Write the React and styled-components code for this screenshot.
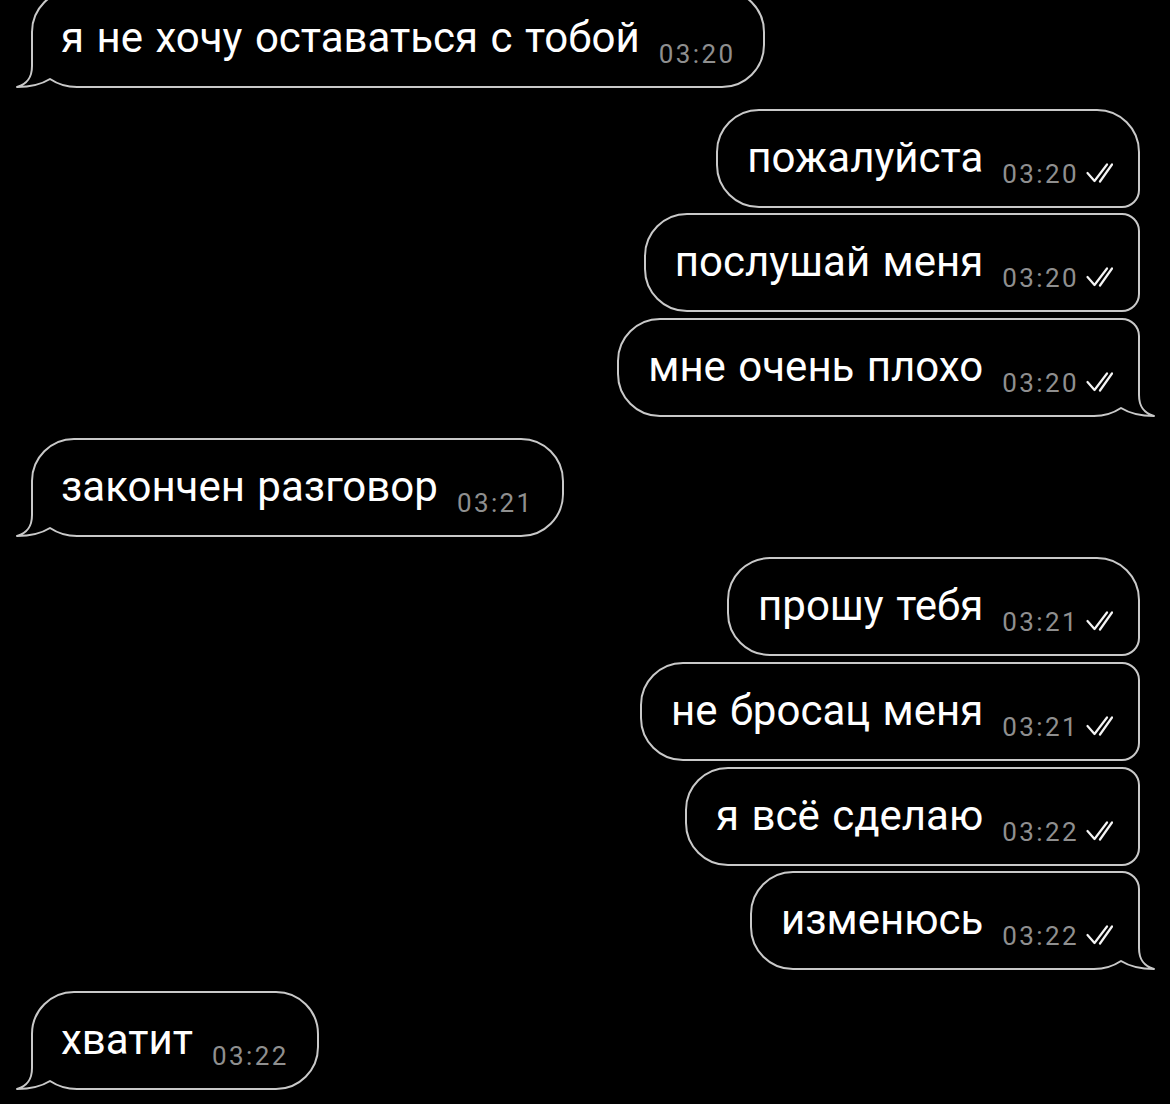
import React from "react";
import styled, { createGlobalStyle, css } from "styled-components";

const GlobalStyle = createGlobalStyle`
  html, body {
    margin: 0;
    padding: 0;
    background: #000;
  }
  body {
    font-family: Roboto, "Noto Sans", "Liberation Sans", sans-serif;
    -webkit-font-smoothing: antialiased;
  }
`;

const Screen = styled.div`
  min-height: 100vh;
  background: #000;
  overflow: hidden;
`;

const Chat = styled.div`
  display: flex;
  flex-direction: column;
  gap: 20.67px;
  margin-top: -11px;
  padding: 0 30px 0 31px;
`;

const Group = styled.div`
  display: flex;
  flex-direction: column;
  gap: 5.67px;
  align-items: ${({ $out }) => ($out ? "flex-end" : "flex-start")};
`;

const BIG = 43;
const SMALL = 18;

const Bubble = styled.div`
  position: relative;
  box-sizing: border-box;
  height: 99px;
  display: inline-flex;
  align-items: flex-end;
  gap: 19px;
  border: 2px solid #c9c9c9;
  background: #000;
  ${({ $out, $pos }) =>
    $out
      ? css`
          padding: 22px 25px 23px 29px;
          border-radius: ${BIG}px
            ${$pos === "first" || $pos === "single" ? BIG : SMALL}px
            ${$pos === "last" || $pos === "single" ? 0 : SMALL}px ${BIG}px;
        `
      : css`
          padding: 22px 28px 23px 28px;
          border-radius: ${BIG}px ${BIG}px ${BIG}px 0;
        `}
`;

const Text = styled.span`
  color: #fff;
  font-size: 42px;
  line-height: 50px;
  word-spacing: 2px;
  white-space: nowrap;
`;

const Meta = styled.span`
  display: inline-flex;
  align-items: flex-end;
  gap: 7px;
  line-height: 18px;
`;

const Time = styled.span`
  color: #8f8f8f;
  font-size: 26px;
  letter-spacing: 2.4px;
`;

const TailSvg = styled.svg`
  position: absolute;
  bottom: -2px;
  width: 70px;
  height: 34px;
  ${({ $out }) =>
    $out
      ? css`
          right: -18px;
          transform: scaleX(-1);
        `
      : css`
          left: -18px;
        `}
`;

// the tail hides the square corner of the border and draws the hook
function Tail({ out }) {
  return (
    <TailSvg $out={out} viewBox="0 0 70 34">
      <rect x="0" y="0" width="19" height="34" fill="#000" />
      <rect x="0" y="29" width="70" height="5" fill="#000" />
      <path
        d="M17 0 V12 C17 24 12 30 2 33 C14 33 27 30 35 25 C44 31 52 33 62 33 H70"
        fill="none"
        stroke="#c9c9c9"
        strokeWidth="2"
        strokeLinejoin="round"
      />
    </TailSvg>
  );
}

function Checks() {
  return (
    <svg width="27" height="20" viewBox="0 0 27 20">
      <path
        d="M1.5 10 L8.5 18 L21 1.5 M14 18.5 L26 1.5"
        fill="none"
        stroke="#f4f4f4"
        strokeWidth="2.2"
        strokeLinecap="round"
        strokeLinejoin="round"
      />
    </svg>
  );
}

function Message({ text, time, out, pos }) {
  const tail = pos === "last" || pos === "single";
  return (
    <Bubble $out={out} $pos={pos}>
      <Text>{text}</Text>
      <Meta>
        <Time>{time}</Time>
        {out && <Checks />}
      </Meta>
      {tail && <Tail out={out} />}
    </Bubble>
  );
}

const groups = [
  { out: false, items: [["я не хочу оставаться с тобой", "03:20"]] },
  {
    out: true,
    items: [
      ["пожалуйста", "03:20"],
      ["послушай меня", "03:20"],
      ["мне очень плохо", "03:20"],
    ],
  },
  { out: false, items: [["закончен разговор", "03:21"]] },
  {
    out: true,
    items: [
      ["прошу тебя", "03:21"],
      ["не бросац меня", "03:21"],
      ["я всё сделаю", "03:22"],
      ["изменюсь", "03:22"],
    ],
  },
  { out: false, items: [["хватит", "03:22"]] },
];

function position(i, n) {
  if (n === 1) return "single";
  if (i === 0) return "first";
  if (i === n - 1) return "last";
  return "middle";
}

export default function App() {
  return (
    <Screen>
      <GlobalStyle />
      <Chat>
        {groups.map((g, gi) => (
          <Group key={gi} $out={g.out}>
            {g.items.map(([text, time], i) => (
              <Message
                key={i}
                text={text}
                time={time}
                out={g.out}
                pos={position(i, g.items.length)}
              />
            ))}
          </Group>
        ))}
      </Chat>
    </Screen>
  );
}
